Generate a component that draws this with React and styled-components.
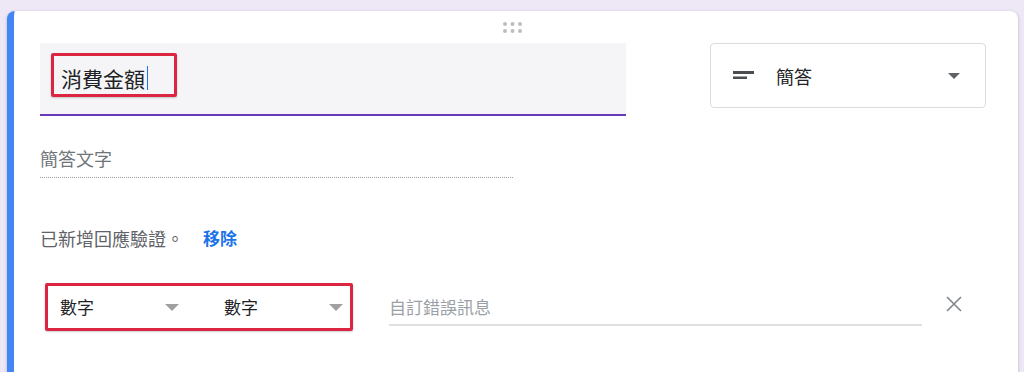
import React from 'react';
import styled, { createGlobalStyle } from 'styled-components';

const GlobalStyle = createGlobalStyle`
  html, body {
    margin: 0;
    padding: 0;
    background: #ede7f6;
    overflow: hidden;
  }
  body {
    font-family: "Noto Sans CJK TC", "Noto Sans", sans-serif;
    color: #202124;
  }
`;

const Page = styled.div`
  padding: 11px 6px 0 7px;
`;

const Card = styled.div`
  box-sizing: border-box;
  background: #fff;
  border-radius: 8px;
  border-left: 7px solid #4285f4;
  box-shadow: 0 1px 2px rgba(60, 64, 67, 0.25), 0 1px 4px rgba(60, 64, 67, 0.12);
  min-height: 420px;
  padding: 0 32px 0 26px;
`;

const DragBar = styled.div`
  height: 32px;
  display: flex;
  align-items: center;
  justify-content: center;
  padding-right: 2px;
  padding-top: 1px;
  box-sizing: border-box;
`;

const TopRow = styled.div`
  display: flex;
  justify-content: space-between;
  align-items: flex-start;
`;

const TitleField = styled.div`
  box-sizing: border-box;
  width: 586px;
  height: 73px;
  background: #f5f5f7;
  border-bottom: 2px solid #673ab7;
  padding: 10px 0 0 11px;
`;

const Highlight = styled.div`
  box-sizing: border-box;
  display: ${p => (p.$inline ? 'inline-flex' : 'flex')};
  align-items: center;
  border: 3px solid #dc2540;
  border-radius: 2px;
  box-shadow: 0 1px 2px rgba(0, 0, 0, 0.2);
  width: ${p => p.$w}px;
  height: ${p => p.$h}px;
  padding-left: ${p => p.$pl}px;
  padding-right: ${p => p.$pr || 0}px;
  padding-top: ${p => p.$pt || 0}px;
`;

const TitleText = styled.span`
  font-size: 21px;
  line-height: 28px;
  color: #202124;
`;

const Caret = styled.span`
  display: inline-block;
  width: 1px;
  height: 24px;
  background: #1a73e8;
  margin-left: 2px;
`;

const TypeSelect = styled.div`
  box-sizing: border-box;
  width: 276px;
  height: 65px;
  border: 1px solid #dadce0;
  border-radius: 4px;
  display: flex;
  align-items: center;
  padding: 0 25px 0 22px;
`;

const TypeLabel = styled.span`
  flex: 1;
  margin-left: 21px;
  font-size: 18px;
  color: #202124;
`;

const Triangle = styled.span`
  width: 0;
  height: 0;
  border-left: ${p => p.$size}px solid transparent;
  border-right: ${p => p.$size}px solid transparent;
  border-top: ${p => p.$size}px solid ${p => p.$color};
`;

const AnswerPreview = styled.div`
  width: 473px;
  margin-top: 30px;
  padding-bottom: 7px;
  border-bottom: 1px dotted #9e9e9e;
  font-size: 18px;
  line-height: 24px;
  color: #70757a;
`;

const ValidationLine = styled.div`
  margin-top: 48px;
  display: flex;
  align-items: center;
  font-size: 18px;
  line-height: 24px;
  color: #5f6368;
`;

const RemoveLink = styled.span`
  margin-left: 19px;
  color: #1a73e8;
  font-weight: 700;
  font-size: 17px;
`;

const RuleRow = styled.div`
  margin-top: 33px;
  display: flex;
  align-items: center;
`;

const RuleSelects = styled(Highlight)`
  margin-left: 5px;
  gap: 45px;
`;

const RuleSelect = styled.div`
  width: 119px;
  display: flex;
  align-items: center;
  justify-content: space-between;
  font-size: 17px;
  line-height: 22px;
  color: #202124;
`;

const ErrorField = styled.div`
  box-sizing: border-box;
  width: 533px;
  margin-left: 36px;
  padding-top: 6px;
  padding-bottom: 5px;
  border-bottom: 2px solid #e0e0e0;
  font-size: 17px;
  line-height: 24px;
  color: #9aa0a6;
`;

const CloseButton = styled.div`
  margin-left: 20px;
  margin-top: -6px;
  width: 24px;
  height: 24px;
  display: flex;
`;

function DragHandle() {
  const xs = [3, 10.5, 18];
  const ys = [3, 10];
  return (
    <svg width="21" height="13" viewBox="0 0 21 13">
      {ys.map(y => xs.map(x => <circle key={`${x}-${y}`} cx={x} cy={y} r="2" fill="#bdbdbd" />))}
    </svg>
  );
}

function ShortTextIcon() {
  return (
    <svg width="22" height="9" viewBox="0 0 22 9">
      <rect x="0" y="0" width="21" height="3" fill="#4a4d51" />
      <rect x="0" y="5.5" width="14" height="2.5" fill="#4a4d51" />
    </svg>
  );
}

function CloseIcon() {
  return (
    <svg width="24" height="24" viewBox="0 0 24 24">
      <path d="M5 5L19 19M19 5L5 19" stroke="#80868b" strokeWidth="1.6" fill="none" />
    </svg>
  );
}

export default function App() {
  return (
    <>
      <GlobalStyle />
      <Page>
        <Card>
          <DragBar>
            <DragHandle />
          </DragBar>
          <TopRow>
            <TitleField>
              <Highlight $inline $w={126} $h={44} $pl={7} $pt={5}>
                <TitleText>消費金額</TitleText>
                <Caret />
              </Highlight>
            </TitleField>
            <TypeSelect>
              <ShortTextIcon />
              <TypeLabel>簡答</TypeLabel>
              <Triangle $size={6} $color="#5f6368" />
            </TypeSelect>
          </TopRow>
          <AnswerPreview>簡答文字</AnswerPreview>
          <ValidationLine>
            已新增回應驗證。
            <RemoveLink>移除</RemoveLink>
          </ValidationLine>
          <RuleRow>
            <RuleSelects $w={308} $h={48} $pl={12} $pr={7}>
              <RuleSelect>
                數字
                <Triangle $size={7} $color="#a0a0a0" />
              </RuleSelect>
              <RuleSelect>
                數字
                <Triangle $size={7} $color="#a0a0a0" />
              </RuleSelect>
            </RuleSelects>
            <ErrorField>自訂錯誤訊息</ErrorField>
            <CloseButton>
              <CloseIcon />
            </CloseButton>
          </RuleRow>
        </Card>
      </Page>
    </>
  );
}
